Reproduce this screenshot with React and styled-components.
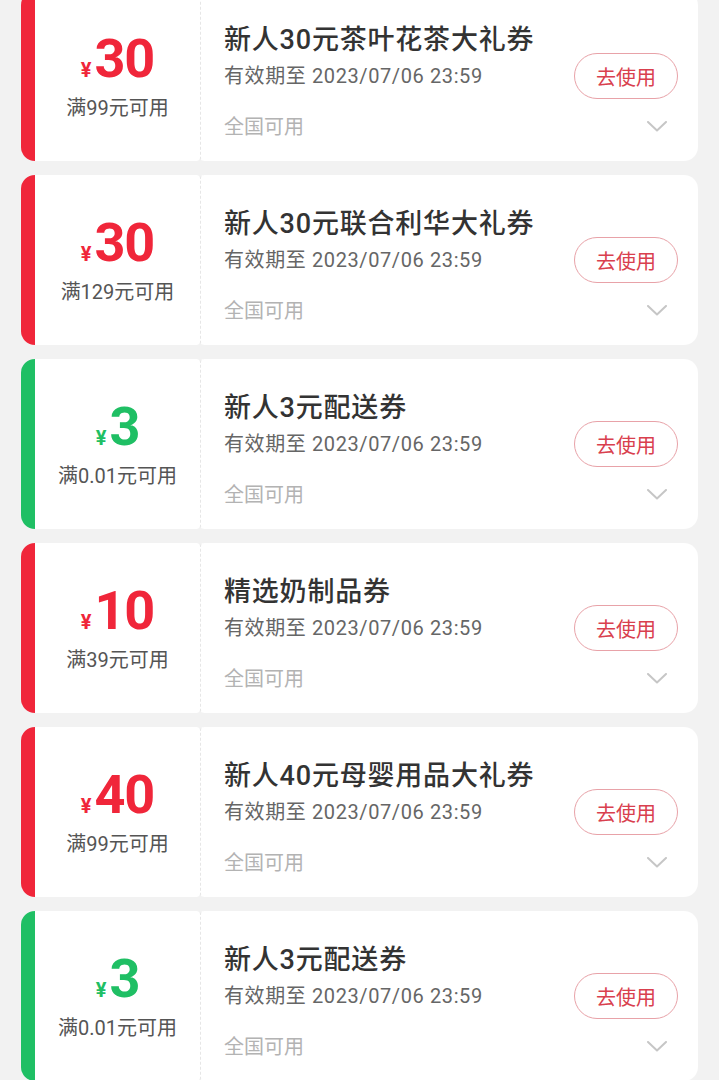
import React from "react"
import styled, { createGlobalStyle } from "styled-components"

const coupons = [
    { amount: "30", limit: "满99元可用", title: "新人30元茶叶花茶大礼券", tone: "red" },
    { amount: "30", limit: "满129元可用", title: "新人30元联合利华大礼券", tone: "red" },
    { amount: "3", limit: "满0.01元可用", title: "新人3元配送券", tone: "green" },
    { amount: "10", limit: "满39元可用", title: "精选奶制品券", tone: "red" },
    { amount: "40", limit: "满99元可用", title: "新人40元母婴用品大礼券", tone: "red" },
    { amount: "3", limit: "满0.01元可用", title: "新人3元配送券", tone: "green" },
]

const tones = {
    red: "#f0263a",
    green: "#1fbf64",
}

export default function App(){
    return(
        <>
            <GlobalStyle/>
            <Page>
                <List>
                    {coupons.map((c, i) =>
                        <Coupon key={i}>
                            <Left color={tones[c.tone]}>
                                <Amount color={tones[c.tone]}>
                                    <Yen>¥</Yen>{c.amount}
                                </Amount>
                                <Limit>{c.limit}</Limit>
                            </Left>
                            <Right>
                                <Title>{c.title}</Title>
                                <span/>
                                <DateText>有效期至 2023/07/06 23:59</DateText>
                                <UseButton>去使用</UseButton>
                                <Scope>全国可用</Scope>
                                <Chevron width="20" height="11" viewBox="0 0 20 11">
                                    <polyline points="1,1 10,9.5 19,1" fill="none" stroke="#c6c6c6" strokeWidth="2" strokeLinecap="round" strokeLinejoin="round"/>
                                </Chevron>
                            </Right>
                        </Coupon>
                    )}
                </List>
            </Page>
        </>
    )
}

const GlobalStyle = createGlobalStyle`
    html, body {
        margin:0;
        padding:0;
        background:#f2f2f2;
    }
    body {
        font-family:Roboto,"Noto Sans CJK SC",sans-serif;
        overflow:hidden;
    }
`;

export const Page = styled.div`
    width:100%;
    height:1080px;
    overflow:hidden;
    box-sizing:border-box;
    padding:0 21px;
`;

export const List = styled.div`
    display:flex;
    flex-direction:column;
    gap:14px;
    margin-top:-9px;
`;

export const Coupon = styled.div`
    display:flex;
    height:170px;
`;

export const Left = styled.div`
    width:179px;
    flex-shrink:0;
    box-sizing:border-box;
    padding-top:4px;
    background:#fff;
    border-left:14px solid ${p => p.color};
    border-radius:14px 4px 4px 14px;
    display:flex;
    flex-direction:column;
    align-items:center;
    justify-content:center;
`;

export const Amount = styled.div`
    color:${p => p.color};
    font-family:Roboto,"Liberation Sans",sans-serif;
    font-weight:700;
    font-size:54px;
    line-height:48px;
    display:flex;
    align-items:baseline;
    letter-spacing:-1px;
`;

export const Yen = styled.span`
    font-size:20px;
    margin-right:3px;
    letter-spacing:0;
`;

export const Limit = styled.div`
    font-size:20px;
    line-height:28px;
    color:#555;
`;

export const Right = styled.div`
    flex:1;
    background:#fff;
    border-left:1px dashed #e6e6e6;
    border-radius:4px 14px 14px 4px;
    padding:36px 20px 0 23px;
    display:grid;
    grid-template-columns:1fr auto;
    grid-template-rows:26px 46px 28px;
    align-items:center;
`;

export const Title = styled.div`
    font-size:27px;
    line-height:32px;
    font-weight:500;
    color:#333;
    white-space:nowrap;
    letter-spacing:0.8px;
`;

export const DateText = styled.div`
    font-size:20px;
    line-height:28px;
    color:#666;
    letter-spacing:0.6px;
`;

export const UseButton = styled.div`
    width:104px;
    height:46px;
    box-sizing:border-box;
    border:1.5px solid #e8a2a8;
    border-radius:23px;
    color:#d9404e;
    font-size:20px;
    display:flex;
    align-items:center;
    justify-content:center;
`;

export const Scope = styled.div`
    font-size:20px;
    line-height:28px;
    color:#b3b3b3;
    margin-top:28px;
`;

export const Chevron = styled.svg`
    justify-self:end;
    margin-right:11px;
    margin-top:26px;
`;
